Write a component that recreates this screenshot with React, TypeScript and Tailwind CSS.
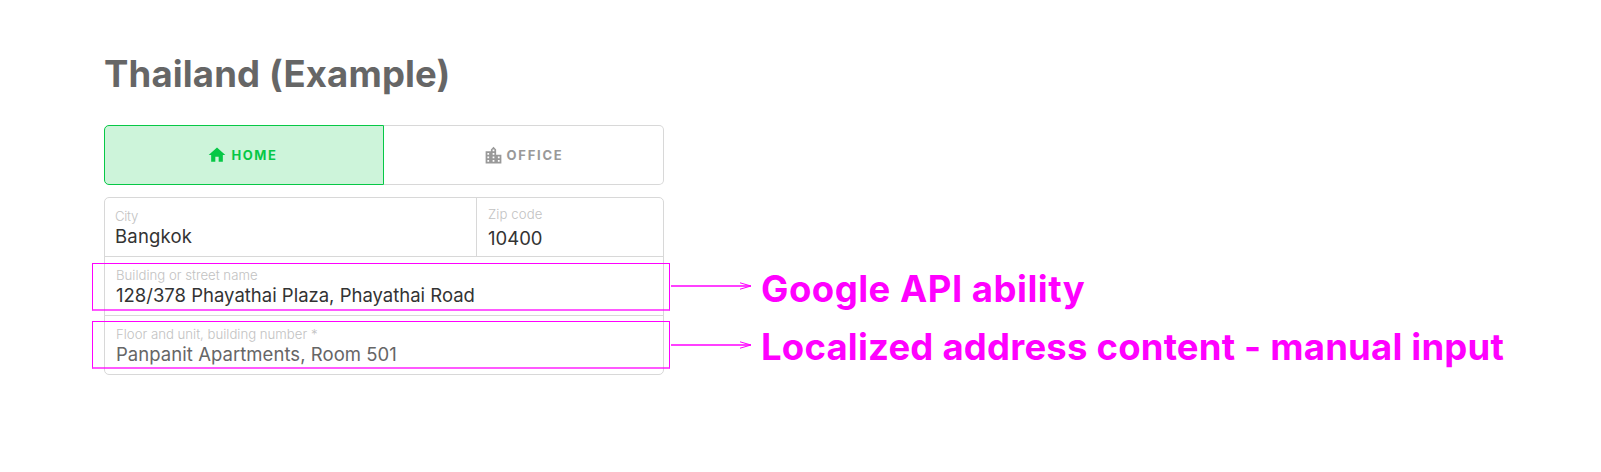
import type { ReactNode } from "react";
import { MdHome, MdLocationCity } from "react-icons/md";

function Label({ children, className = "" }: { children: ReactNode; className?: string }) {
  return (
    <div className={`whitespace-nowrap text-[13.2px] font-light leading-4 text-[#c2c2c2] ${className}`}>{children}</div>
  );
}

function Value({ children, className = "" }: { children: ReactNode; className?: string }) {
  return <div className={`whitespace-nowrap text-[18.5px] leading-6 ${className}`}>{children}</div>;
}

function Outline({ className }: { className: string }) {
  return (
    <div
      className={`pointer-events-none absolute -left-[13px] w-[578px] border border-b-2 border-[#ff00ff] border-b-[#ff00ff]/65 ${className}`}
    />
  );
}

function Arrow() {
  return (
    <svg width="81" height="12" viewBox="0 0 81 12" fill="none" className="shrink-0">
      <path d="M0 6H80" stroke="#ff00ff" strokeOpacity="0.75" strokeWidth="2" />
      <path d="M69 2.8L80 6L69 9.2" stroke="#ff00ff" strokeWidth="1" />
    </svg>
  );
}

export default function App() {
  return (
    <main className="h-[472px] w-[1601px] overflow-hidden bg-white pl-[104px] pt-[50px] font-['Inter',sans-serif]">
      <h1 className="h-[75px] whitespace-nowrap text-[36.5px] font-bold leading-[48px] tracking-[0.15px] text-[#666666]">
        Thailand (Example)
      </h1>

      <div className="flex">
        <div className="w-[560px] shrink-0">
          <div className="flex h-[60px] text-[13px] font-bold">
            <button className="flex w-[280px] items-center justify-center rounded-l-[5px] border border-[#06c846] bg-[#cdf4da] pr-[3px] text-[#06c846]">
              <MdHome className="mr-[4px] size-[20px]" />
              <span className="pt-px tracking-[1.6px]">HOME</span>
            </button>
            <button className="flex w-[280px] items-center justify-center rounded-r-[5px] border border-l-0 border-[#d8d8d8] pr-px text-[#999999]">
              <MdLocationCity className="mr-[3px] size-[21px]" />
              <span className="pt-px tracking-[1.75px]">OFFICE</span>
            </button>
          </div>

          <div className="mt-3 rounded-[5px] border border-[#d8d8d8]">
            <div className="flex h-[59px] border-b border-[#d8d8d8]">
              <div className="w-[371px] pl-[10px] pt-[10px]">
                <Label className="tracking-[-0.3px]">City</Label>
                <Value className="tracking-[0.2px] text-[#333333]">Bangkok</Value>
              </div>
              <div className="flex-1 border-l border-[#d8d8d8] pl-[11px] pt-[8px]">
                <Label className="tracking-[0.1px]">Zip code</Label>
                <Value className="mt-1 text-[#333333]">10400</Value>
              </div>
            </div>
            <div className="relative h-[59px] border-b border-[#d8d8d8] pl-[11px] pt-[10px]">
              <Label>Building or street name</Label>
              <Value className="text-[#333333]">128/378 Phayathai Plaza, Phayathai Road</Value>
              <Outline className="top-[6px] h-[48px]" />
            </div>
            <div className="relative h-[58px] pl-[11px] pt-[10px]">
              <Label>Floor and unit, building number *</Label>
              <Value className="tracking-[0.05px] text-[#666666]">Panpanit Apartments, Room 501</Value>
              <Outline className="top-[5px] h-[48px]" />
            </div>
          </div>
        </div>

        <div className="ml-[7px] flex flex-col pt-[140px] text-[36.5px] font-bold leading-[48px] text-[#ff00ff]">
          <div className="flex h-[58px] items-start">
            <div className="pt-[15px]">
              <Arrow />
            </div>
            <span className="ml-[9px] whitespace-nowrap tracking-[0.5px]">Google API ability</span>
          </div>
          <div className="flex h-[58px] items-start">
            <div className="pt-[16px]">
              <Arrow />
            </div>
            <span className="ml-[9px] whitespace-nowrap tracking-[0.2px]">Localized address content - manual input</span>
          </div>
        </div>
      </div>
    </main>
  );
}
